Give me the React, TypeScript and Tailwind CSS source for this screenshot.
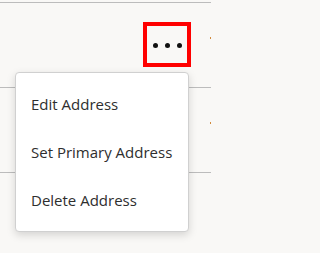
import React from "react";

const rows = [0, 1, 2];

const menuItems = ["Edit Address", "Set Primary Address", "Delete Address"];

export default function App() {
  return (
    <div
      className="relative w-full min-w-[219px] min-h-screen h-[253px] overflow-hidden bg-[#f9f8f6]"
      style={{ fontFamily: '"Open Sans", "Noto Sans", sans-serif' }}
    >
      <div className="w-[211px] pt-[2px]">
        {rows.map((r) => (
          <div
            key={r}
            className="h-[85px] border-t border-[#bcbcbc] flex justify-end items-start"
          >
            {r === 0 && (
              <button className="mt-[19px] w-[48px] h-[45px] border-4 border-[#ff0000] flex items-center justify-center gap-[7px] pl-[1px] pt-[1px]">
                <span className="w-[5px] h-[5px] rounded-full bg-[#111]" />
                <span className="w-[5px] h-[5px] rounded-full bg-[#111]" />
                <span className="w-[5px] h-[5px] rounded-full bg-[#111]" />
              </button>
            )}
            {r < 2 && (
              <span
                className={`mt-[34px] w-px h-[2px] bg-[#d28a3c] ${
                  r === 0 ? "ml-[19px]" : "ml-0"
                }`}
              />
            )}
          </div>
        ))}
      </div>

      {/* dropdown menu */}
      <div className="absolute left-[15px] top-[72px] w-[174px] bg-white border border-[#d0d0d0] rounded-[4px] shadow-[0_3px_8px_rgba(0,0,0,0.15)] py-[7px]">
        {menuItems.map((item) => (
          <div
            key={item}
            className="h-12 flex items-center pl-[15px] text-[15px] text-[#2e2e2e]"
          >
            {item}
          </div>
        ))}
      </div>
    </div>
  );
}
